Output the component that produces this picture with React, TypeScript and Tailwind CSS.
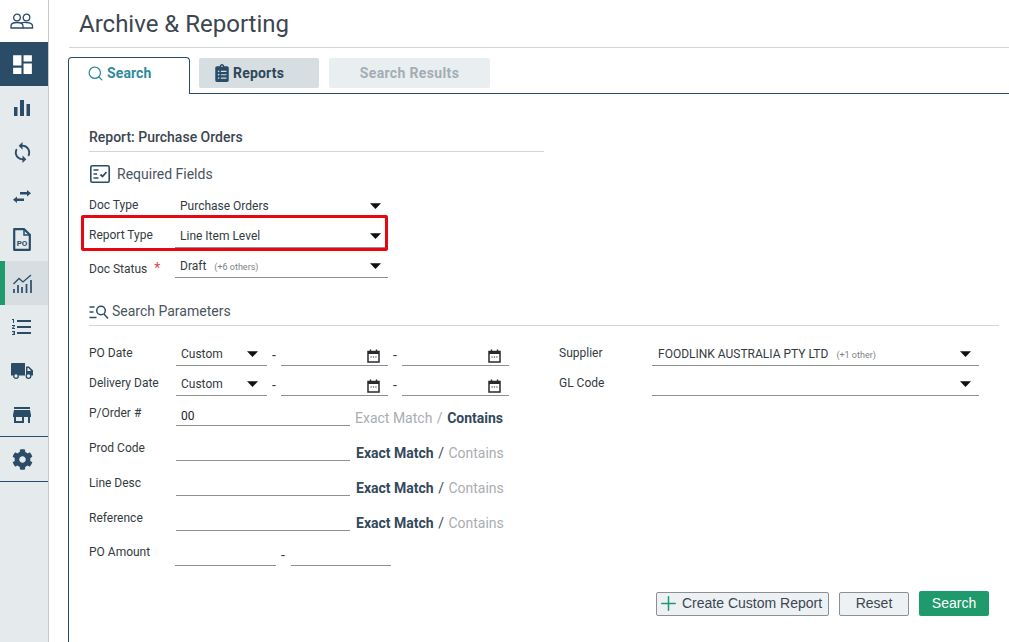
import type { ReactNode } from "react";
import { Search, Plus } from "lucide-react";
import { FaClipboardList, FaCog } from "react-icons/fa";
import { MdDashboard, MdFormatListNumbered, MdStore, MdSync } from "react-icons/md";

const NAVY = "text-[#2b4c66]";

function PeopleIcon() {
  return (
    <svg width="24" height="16" viewBox="0 0 24 16" fill="none" stroke="currentColor" strokeWidth="1.3">
      <circle cx="7" cy="4.5" r="3.3" />
      <circle cx="16.5" cy="4.5" r="3.3" />
      <path d="M1 15v-2c0-2 2.500-3.500 6-3.500s6 1.500 6 3.500v2z" />
      <path d="M11 9.800c1.500-.3 3.500-.5 5.500-.3 3.500.2 6 1.500 6 3.500v2H13" />
    </svg>
  );
}

function BarsIcon() {
  return (
    <svg width="16" height="16" viewBox="0 0 16 16" fill="currentColor">
      <rect x="0" y="7" width="3.500" height="9" />
      <rect x="6" y="0" width="4" height="16" />
      <rect x="12.500" y="4" width="3.500" height="12" />
    </svg>
  );
}

function SwapIcon() {
  return (
    <svg width="18" height="13" viewBox="0 0 18 13" fill="currentColor">
      <path d="M7 2h7V0l4 3.200-4 3.200V4.500H7z" />
      <path d="M11 8.600H4V6.600L0 9.800 4 13v-2h7z" />
    </svg>
  );
}

function PoIcon() {
  return (
    <svg width="18" height="23" viewBox="0 0 18 23" fill="none">
      <path d="M1.200 1.200h10l5.600 5.600v15H1.200z" stroke="currentColor" strokeWidth="2.200" strokeLinejoin="round" />
      <path d="M11 1.500V7h5.500" stroke="currentColor" strokeWidth="1.500" />
      <text x="9" y="18" textAnchor="middle" fontSize="8" fontWeight="700" fill="currentColor" fontFamily="Roboto, sans-serif">
        PO
      </text>
    </svg>
  );
}

function TrendIcon() {
  return (
    <svg width="19" height="19" viewBox="0 0 19 19" fill="none" stroke="currentColor">
      <path d="M0.500 10L6 4.500l4 3.500 8-7" strokeWidth="1.300" />
      <path d="M1 15v4M5 11v8M9 13v6M13.500 10v9M18 6v13" strokeWidth="1.700" />
    </svg>
  );
}

function TruckIcon() {
  return (
    <svg width="22" height="16" viewBox="0 0 22 16" fill="currentColor">
      <path d="M0 1a1 1 0 0 1 1-1h13v12.500H0z" />
      <path d="M15 3.500h3l4 4v5h-7zM16.500 5v3h3.500l-2.500-3z" fillRule="evenodd" />
      <circle cx="5" cy="13" r="2.300" fill="#e5eaed" stroke="currentColor" strokeWidth="1.300" />
      <circle cx="17.500" cy="13" r="2.300" fill="#e5eaed" stroke="currentColor" strokeWidth="1.300" />
    </svg>
  );
}

function CalendarIcon() {
  return (
    <svg width="13" height="14" viewBox="0 0 13 14" fill="none" className="text-[#2a2a2e]">
      <rect x="1" y="2.500" width="11" height="10.500" stroke="currentColor" strokeWidth="1.500" />
      <rect x="1" y="2.500" width="11" height="2.500" fill="currentColor" />
      <path d="M3.500 0.500v2.500M9.500 0.500v2.500" stroke="currentColor" strokeWidth="1.400" />
      <path d="M3.500 8h1.200M5.900 8h1.200M8.300 8h1.200" stroke="currentColor" strokeWidth="1.200" />
    </svg>
  );
}

function RequiredIcon() {
  return (
    <svg width="20" height="18" viewBox="0 0 20 18" fill="none" stroke="#2b4c66">
      <rect x="0.800" y="0.800" width="18.400" height="16.400" rx="1.500" strokeWidth="1.600" />
      <path d="M3.500 5h5M3.500 9h3.500M3.500 13h5" strokeWidth="1.700" />
      <path d="M10.500 9.500l2 2 4-4.500" strokeWidth="1.800" />
    </svg>
  );
}

function ParamsIcon() {
  return (
    <svg width="20" height="14" viewBox="0 0 20 14" fill="none" stroke="#2b4c66" strokeWidth="1.500">
      <path d="M0.500 2h5M0.500 7h4M0.500 12.500h7" />
      <circle cx="12" cy="5.500" r="4.300" />
      <path d="M15 9l4 4.500" />
    </svg>
  );
}

function Caret() {
  return (
    <svg width="11" height="6" viewBox="0 0 11 6" className="mb-[5px] shrink-0">
      <path d="M0 0.300h11L5.500 6z" fill="#111" />
    </svg>
  );
}

function NavItem({ children, kind }: { children: ReactNode; kind?: "top" | "dark" | "active" }) {
  const tone =
    kind === "top"
      ? "h-[42px] bg-white pr-[4px]"
      : kind === "dark"
        ? "h-[44px] bg-[#2b4c66] pr-[3px] text-white"
        : kind === "active"
          ? "h-[44px] border-l-[5px] border-[#1f9a6d] bg-[#d6dee1] pr-[9px]"
          : "h-[44px] pr-[4px]";
  return <div className={`flex items-center justify-center ${NAVY} ${tone}`}>{children}</div>;
}

function Sidebar() {
  return (
    <div className="flex w-[49px] shrink-0 flex-col border-r border-[#c3cbd0] bg-[#e5eaed]">
      <NavItem kind="top">
        <PeopleIcon />
      </NavItem>
      <NavItem kind="dark">
        <MdDashboard size={25} />
      </NavItem>
      <NavItem>
        <BarsIcon />
      </NavItem>
      <NavItem>
        <MdSync size={23} />
      </NavItem>
      <NavItem>
        <SwapIcon />
      </NavItem>
      <div className="flex h-[43px] items-center justify-center pr-[5px] text-[#2b4c66]">
        <PoIcon />
      </div>
      <NavItem kind="active">
        <TrendIcon />
      </NavItem>
      <NavItem>
        <MdFormatListNumbered size={24} />
      </NavItem>
      <NavItem>
        <TruckIcon />
      </NavItem>
      <div className="flex h-[44px] items-center justify-center border-b border-[#2b4c66] pr-[4px] text-[#2b4c66]">
        <MdStore size={24} />
      </div>
      <div className="flex h-[45px] items-center justify-center border-b border-[#2b4c66] pr-[4px] text-[#2b4c66]">
        <FaCog size={21} />
      </div>
    </div>
  );
}

function Select({ width, value, extra, caretGap = "pr-[7px]", inset = "pl-[5px]" }: { width: string; value?: string; extra?: string; caretGap?: string; inset?: string }) {
  return (
    <div className={`flex h-[30px] items-end justify-between border-b border-[#8c9093] pb-[3px] ${inset} ${caretGap} ${width}`}>
      <span className={`truncate text-[12px] leading-[16px] text-[#333b41] ${extra ? "translate-y-px" : ""}`}>
        {value}
        {extra && <span className="ml-[8px] text-[9px] text-[#7d8184]">{extra}</span>}
      </span>
      <Caret />
    </div>
  );
}

function FieldLabel({ children, width = "w-[86px]", top = "pt-[9px]" }: { children: ReactNode; width?: string; top?: string }) {
  return <div className={`shrink-0 text-[12px] leading-[16px] text-[#333b41] ${top} ${width}`}>{children}</div>;
}

function DateInput() {
  return (
    <div className="flex h-[30px] w-[107px] items-end justify-end border-b border-[#8c9093] pr-[8px] pb-[2px]">
      <CalendarIcon />
    </div>
  );
}

function Dash() {
  return <span className="flex h-[30px] w-[14px] items-end justify-center text-[14px] text-[#333b41]">-</span>;
}

function DateRow({ label }: { label: string }) {
  return (
    <div className="flex h-[30px]">
      <FieldLabel width="w-[87px]">{label}</FieldLabel>
      <Select width="w-[91px]" value="Custom" caretGap="pr-[9px]" />
      <Dash />
      <DateInput />
      <Dash />
      <DateInput />
    </div>
  );
}

function MatchRow({ label, value, contains }: { label: string; value?: string; contains?: boolean }) {
  return (
    <div className="flex h-[35px]">
      <FieldLabel width="w-[87px]">{label}</FieldLabel>
      <div className="flex h-[30px] w-[174px] items-end border-b border-[#8c9093] pl-[5px] text-[12px] text-[#222]">
        {value}
      </div>
      <div className={`flex h-[32px] items-end text-[14px] leading-[20px] ${contains ? "ml-[5px]" : "ml-[6px]"}`}>
        <span className={contains ? "text-[#a9adb1]" : "font-bold text-[#34495a]"}>Exact Match</span>
        <span className={`mx-[4.500px] ${contains ? "text-[#a9adb1]" : "text-[#34495a]"}`}>/</span>
        <span className={contains ? "font-bold text-[#34495a]" : "text-[#a9adb1]"}>Contains</span>
      </div>
    </div>
  );
}

export default function App() {
  return (
    <div className="flex h-[642px] w-[1009px] overflow-hidden bg-white font-['Roboto',sans-serif]">
      <Sidebar />
      <div className="flex min-w-0 flex-1 flex-col pl-[20px]">
        <div className="flex h-[48px] items-center border-b border-[#cfd5d8] pl-[10px] text-[24px] text-[#3b4650]">
          Archive &amp; Reporting
        </div>
        <div className="mt-[9px] flex h-[37px] items-start border-b border-[#2b4c66]">
          <div className="relative z-10 -ml-px flex h-[37px] w-[122px] items-center gap-[3px] rounded-t-[4px] border border-b-0 border-[#2b4c66] bg-white pb-[6px] pl-[18px] text-[14px] font-bold tracking-[0.1px] text-[#2f8a9c]">
            <Search size={17} strokeWidth={1.8} />
            Search
          </div>
          <div className="mt-[1px] ml-[9px] flex h-[30px] w-[120px] items-center gap-[2px] rounded-[2px] bg-[#d6dee1] pl-[14px] text-[14px] font-bold tracking-[0.2px] text-[#2f4658]">
            <FaClipboardList size={18} className="text-[#2b4c66]" />
            Reports
          </div>
          <div className="mt-[1px] ml-[10px] flex h-[30px] w-[161px] items-center justify-center rounded-[2px] bg-[#e9eef0] text-[14px] font-bold tracking-[0.35px] text-[#a3adb5]">
            Search Results
          </div>
        </div>
        <div className="relative -ml-px flex-1 border-l border-[#2b4c66] pl-[20px]">
          <div className="mt-[34px] w-[455px] border-b border-[#cfd5d8] pb-[5px] text-[14px] leading-[18px] font-medium text-[#3b4650]">
            Report: Purchase Orders
          </div>
          <div className="mt-[12px] flex h-[20px] items-center gap-[7px] pl-[1px] text-[14px] text-[#4a5560]">
            <RequiredIcon />
            Required Fields
          </div>
          <div className="mt-[4px] flex h-[30px]">
            <FieldLabel>Doc Type</FieldLabel>
            <Select width="w-[213px]" value="Purchase Orders" />
          </div>
          <div className="flex h-[30px]">
            <FieldLabel>Report Type</FieldLabel>
            <Select width="w-[213px]" value="Line Item Level" />
          </div>
          <div className="flex h-[30px]">
            <FieldLabel top="pt-[12px]">
              Doc Status <span className="ml-[4px] text-[14px] text-[#e2483f]">*</span>
            </FieldLabel>
            <Select width="w-[213px]" value="Draft" extra="(+6 others)" />
          </div>
          <div className="absolute top-[121px] left-[12px] h-[36px] w-[307px] rounded-[2px] border-[3px] border-[#e8060f]" />

          <div className="mt-[24px] flex h-[24px] w-[910px] items-center gap-[3px] border-b border-[#cfd5d8] pb-[4px] text-[14px] text-[#4a5560]">
            <ParamsIcon />
            Search Parameters
          </div>
          <div className="mt-[10px] flex">
            <div className="w-[470px]">
              <DateRow label="PO Date" />
              <DateRow label="Delivery Date" />
            </div>
            <div>
              <div className="flex h-[30px]">
                <FieldLabel width="w-[93px]">Supplier</FieldLabel>
                <Select width="w-[327px]" value="FOODLINK AUSTRALIA PTY LTD" extra="(+1 other)" caretGap="pr-[8px]" inset="pl-[6px]" />
              </div>
              <div className="flex h-[30px]">
                <FieldLabel width="w-[93px]">GL Code</FieldLabel>
                <Select width="w-[327px]" caretGap="pr-[8px]" />
              </div>
            </div>
          </div>
          <MatchRow label="P/Order #" value="00" contains />
          <MatchRow label="Prod Code" />
          <MatchRow label="Line Desc" />
          <MatchRow label="Reference" />
          <div className="flex h-[30px]">
            <FieldLabel width="w-[86px]" top="pt-[8px]">PO Amount</FieldLabel>
            <div className="h-[30px] w-[101px] border-b border-[#8c9093]" />
            <Dash />
            <div className="ml-[1px] h-[30px] w-[100px] border-b border-[#8c9093]" />
          </div>
          <div className="mt-[25px] flex w-[900px] items-center justify-end gap-[10px] font-['Liberation_Sans',sans-serif] text-[14px]">
            <button type="button" className="flex h-[24px] w-[173px] items-center gap-[2px] rounded-[2px] border border-[#8c9093] bg-[#eef1f4] text-[#3b4650]">
              <Plus size={23} strokeWidth={1.6} className="text-[#1f9a6d]" />
              Create Custom Report
            </button>
            <button type="button" className="h-[24px] w-[70px] rounded-[2px] border border-[#8c9093] bg-[#eef1f4] text-[#3b4650]">
              Reset
            </button>
            <button type="button" className="h-[25px] w-[70px] rounded-[2px] bg-[#1f9a6d] text-white">
              Search
            </button>
          </div>
        </div>
      </div>
    </div>
  );
}
